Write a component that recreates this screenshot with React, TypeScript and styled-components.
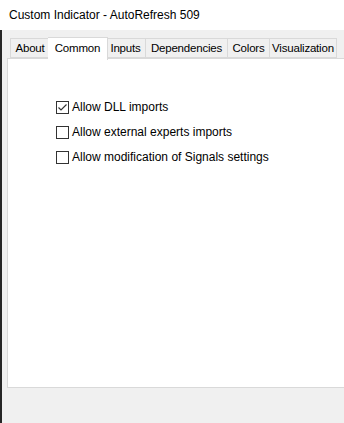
import styled, { createGlobalStyle } from 'styled-components'

const GlobalStyle = createGlobalStyle`
  html, body {
    margin: 0;
    padding: 0;
    background: #f0f0f0;
  }
  body {
    font-family: 'Segoe UI', 'Liberation Sans', Arial, sans-serif;
    font-size: 12px;
    color: #000;
  }
`

const tabs = [
  { name: 'About', width: 40 },
  { name: 'Common', width: 56 },
  { name: 'Inputs', width: 40 },
  { name: 'Dependencies', width: 82 },
  { name: 'Colors', width: 42 },
  { name: 'Visualization', width: 67 },
]
const options = [
  { label: 'Allow DLL imports', checked: true },
  { label: 'Allow external experts imports', checked: false },
  { label: 'Allow modification of Signals settings', checked: false },
]

export default function App() {
  return (
    <>
      <GlobalStyle />
      <Screen>
        <ChartEdge />
        <Window>
          <TitleBar>Custom Indicator - AutoRefresh 509</TitleBar>
          <Body>
            <TabStrip>
              {tabs.map((t) => (
                <Tab key={t.name} $active={t.name === 'Common'} $width={t.width}>
                  {t.name}
                </Tab>
              ))}
            </TabStrip>
            <Panel>
              <OptionList>
                {options.map((o) => (
                  <Option key={o.label}>
                    <Box>
                      {o.checked && (
                        <svg width="11" height="11" viewBox="0 0 11 11">
                          <path d="M1.5 5.5 L4 8 L9.5 2.5" fill="none" stroke="#333" strokeWidth="1.2" />
                        </svg>
                      )}
                    </Box>
                    <span>{o.label}</span>
                  </Option>
                ))}
              </OptionList>
            </Panel>
          </Body>
        </Window>
      </Screen>
    </>
  )
}

const Screen = styled.div`
  display: flex;
  width: 344px;
  height: 423px;
  overflow: hidden;
`

const ChartEdge = styled.div`
  width: 2px;
  margin-top: 4px;
  background: #262626;
  flex-shrink: 0;
`

const Window = styled.div`
  flex: 1;
  display: flex;
  flex-direction: column;
  min-width: 0;
`

const TitleBar = styled.div`
  height: 30px;
  margin-left: -2px;
  padding-left: 9px;
  background: #fff;
  display: flex;
  align-items: center;
  font-size: 12px;
  white-space: nowrap;
`

const Body = styled.div`
  flex: 1;
  padding: 7px 0 35px 5px;
  display: flex;
  flex-direction: column;
`

const TabStrip = styled.div`
  display: flex;
  align-items: flex-end;
  height: 21px;
  padding-left: 3px;
  position: relative;
  z-index: 1;
`

const Tab = styled.div<{ $active?: boolean; $width: number }>`
  box-sizing: border-box;
  width: ${(p) => p.$width + (p.$active ? 4 : 0)}px;
  height: ${(p) => (p.$active ? '23px' : '20px')};
  margin: ${(p) => (p.$active ? '0 -2px -2px -2px' : '0')};
  padding-bottom: ${(p) => (p.$active ? '2px' : '0')};
  background: ${(p) => (p.$active ? '#fff' : '#f0f0f0')};
  border: 1px solid #d9d9d9;
  border-bottom: ${(p) => (p.$active ? 'none' : '1px solid #d9d9d9')};
  display: flex;
  align-items: center;
  justify-content: center;
  font-size: 11.5px;
  letter-spacing: -0.2px;
  white-space: nowrap;
  position: relative;
  z-index: ${(p) => (p.$active ? 2 : 1)};
  & + & {
    border-left: ${(p) => (p.$active ? '1px solid #d9d9d9' : 'none')};
  }
`

const Panel = styled.div`
  flex: 1;
  background: #fff;
  border: 1px solid #d9d9d9;
  border-right: none;
  padding: 41px 0 0 48px;
`

const OptionList = styled.div`
  display: flex;
  flex-direction: column;
  gap: 11px;
`

const Option = styled.label`
  display: flex;
  align-items: center;
  gap: 3px;
  height: 14px;
  font-size: 12px;
  white-space: nowrap;
`

const Box = styled.span`
  box-sizing: border-box;
  width: 13px;
  height: 13px;
  border: 1px solid #333;
  background: #fff;
  display: flex;
  align-items: center;
  justify-content: center;
  flex-shrink: 0;
`
